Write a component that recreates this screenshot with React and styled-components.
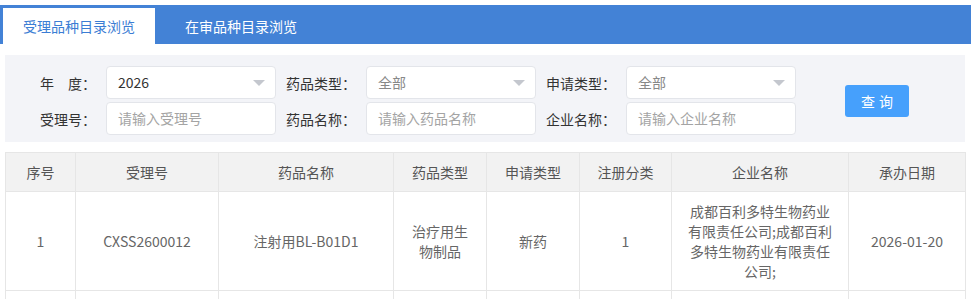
import styled, { createGlobalStyle } from 'styled-components';

const GlobalStyle = createGlobalStyle`
  body {
    margin: 0;
    background: #ffffff;
    font-family: "Noto Sans CJK SC", "Noto Sans", sans-serif;
    font-size: 14px;
    color: #333333;
  }
`;

const Page = styled.div`
  padding-top: 5px;
  width: 971px;
`;

const TabBar = styled.div`
  display: flex;
  gap: 10px;
  height: 39px;
  padding: 3px 0 0 3px;
  box-sizing: border-box;
  background: #4382d6;
`;

const Tab = styled.div`
  height: 36px;
  padding: 0 20px;
  line-height: 36px;
  font-size: 14px;
  color: ${(p) => (p.$active ? '#3b7dd4' : '#ffffff')};
  background: ${(p) => (p.$active ? '#ffffff' : 'transparent')};
`;

const Content = styled.div`
  padding: 0 6px 0 5px;
`;

const Panel = styled.div`
  display: flex;
  align-items: center;
  margin-top: 11px;
  padding: 11px 0 7px 11px;
  background: #f3f4f8;
`;

const Fields = styled.div`
  display: grid;
  grid-template-columns: repeat(3, 260px);
  row-gap: 3px;
`;

const Field = styled.div`
  display: flex;
  align-items: center;
`;

const Label = styled.label`
  width: 80px;
  margin-right: 10px;
  text-align: right;
  color: #333333;
  white-space: nowrap;
`;

const Input = styled.div`
  position: relative;
  width: 170px;
  height: 33px;
  box-sizing: border-box;
  padding: 0 11px;
  border: 1px solid #e3e5ea;
  border-radius: 4px;
  background: #ffffff;
  line-height: 31px;
  color: ${(p) => (p.$tone === 'value' ? '#333333' : p.$tone === 'option' ? '#888888' : '#a4a4a4')};
`;

const Arrow = styled.span`
  position: absolute;
  right: 10px;
  top: 13px;
  width: 0;
  height: 0;
  border-left: 6px solid transparent;
  border-right: 6px solid transparent;
  border-top: 6px solid #c4c7ce;
`;

const Button = styled.button`
  margin-left: 49px;
  width: 64px;
  height: 32px;
  border: none;
  border-radius: 3px;
  background: #46a0fc;
  color: #ffffff;
  font-family: inherit;
  font-size: 14px;
  letter-spacing: 4px;
  text-indent: 4px;
  cursor: pointer;
`;

const Table = styled.table`
  margin-top: 10px;
  width: 960px;
  table-layout: fixed;
  border-collapse: collapse;

  th, td {
    border: 1px solid #e6e6e6;
    padding: 9px 15px;
    line-height: 20px;
    text-align: center;
    vertical-align: middle;
    font-size: 14px;
  }

  th {
    background: #f2f2f2;
    font-weight: normal;
    color: #555555;
  }

  td {
    color: #666666;
  }
`;

const EmptyRow = styled.tr`
  height: 39px;
`;

const columns = [
  { title: '序号', width: 70 },
  { title: '受理号', width: 143 },
  { title: '药品名称', width: 175 },
  { title: '药品类型', width: 93 },
  { title: '申请类型', width: 93 },
  { title: '注册分类', width: 92 },
  { title: '企业名称', width: 177 },
  { title: '承办日期', width: 117 },
];

const rows = [
  ['1', 'CXSS2600012', '注射用BL-B01D1', '治疗用生物制品', '新药', '1',
    '成都百利多特生物药业有限责任公司;成都百利多特生物药业有限责任公司;', '2026-01-20'],
];

export default function App() {
  return (
    <Page>
      <GlobalStyle />
      <TabBar>
        <Tab $active>受理品种目录浏览</Tab>
        <Tab>在审品种目录浏览</Tab>
      </TabBar>
      <Content>
        <Panel>
          <Fields>
            <Field>
              <Label>年　度：</Label>
              <Input $tone="value">2026<Arrow /></Input>
            </Field>
            <Field>
              <Label>药品类型：</Label>
              <Input $tone="option">全部<Arrow /></Input>
            </Field>
            <Field>
              <Label>申请类型：</Label>
              <Input $tone="option">全部<Arrow /></Input>
            </Field>
            <Field>
              <Label>受理号：</Label>
              <Input>请输入受理号</Input>
            </Field>
            <Field>
              <Label>药品名称：</Label>
              <Input>请输入药品名称</Input>
            </Field>
            <Field>
              <Label>企业名称：</Label>
              <Input>请输入企业名称</Input>
            </Field>
          </Fields>
          <Button type="button">查询</Button>
        </Panel>
        <Table>
          <colgroup>
            {columns.map((c) => <col key={c.title} style={{ width: c.width }} />)}
          </colgroup>
          <thead>
            <tr>
              {columns.map((c) => <th key={c.title}>{c.title}</th>)}
            </tr>
          </thead>
          <tbody>
            {rows.map((r) => (
              <tr key={r[0]}>
                {r.map((cell, i) => <td key={columns[i].title}>{cell}</td>)}
              </tr>
            ))}
            <EmptyRow>
              {columns.map((c) => <td key={c.title} />)}
            </EmptyRow>
          </tbody>
        </Table>
      </Content>
    </Page>
  );
}
